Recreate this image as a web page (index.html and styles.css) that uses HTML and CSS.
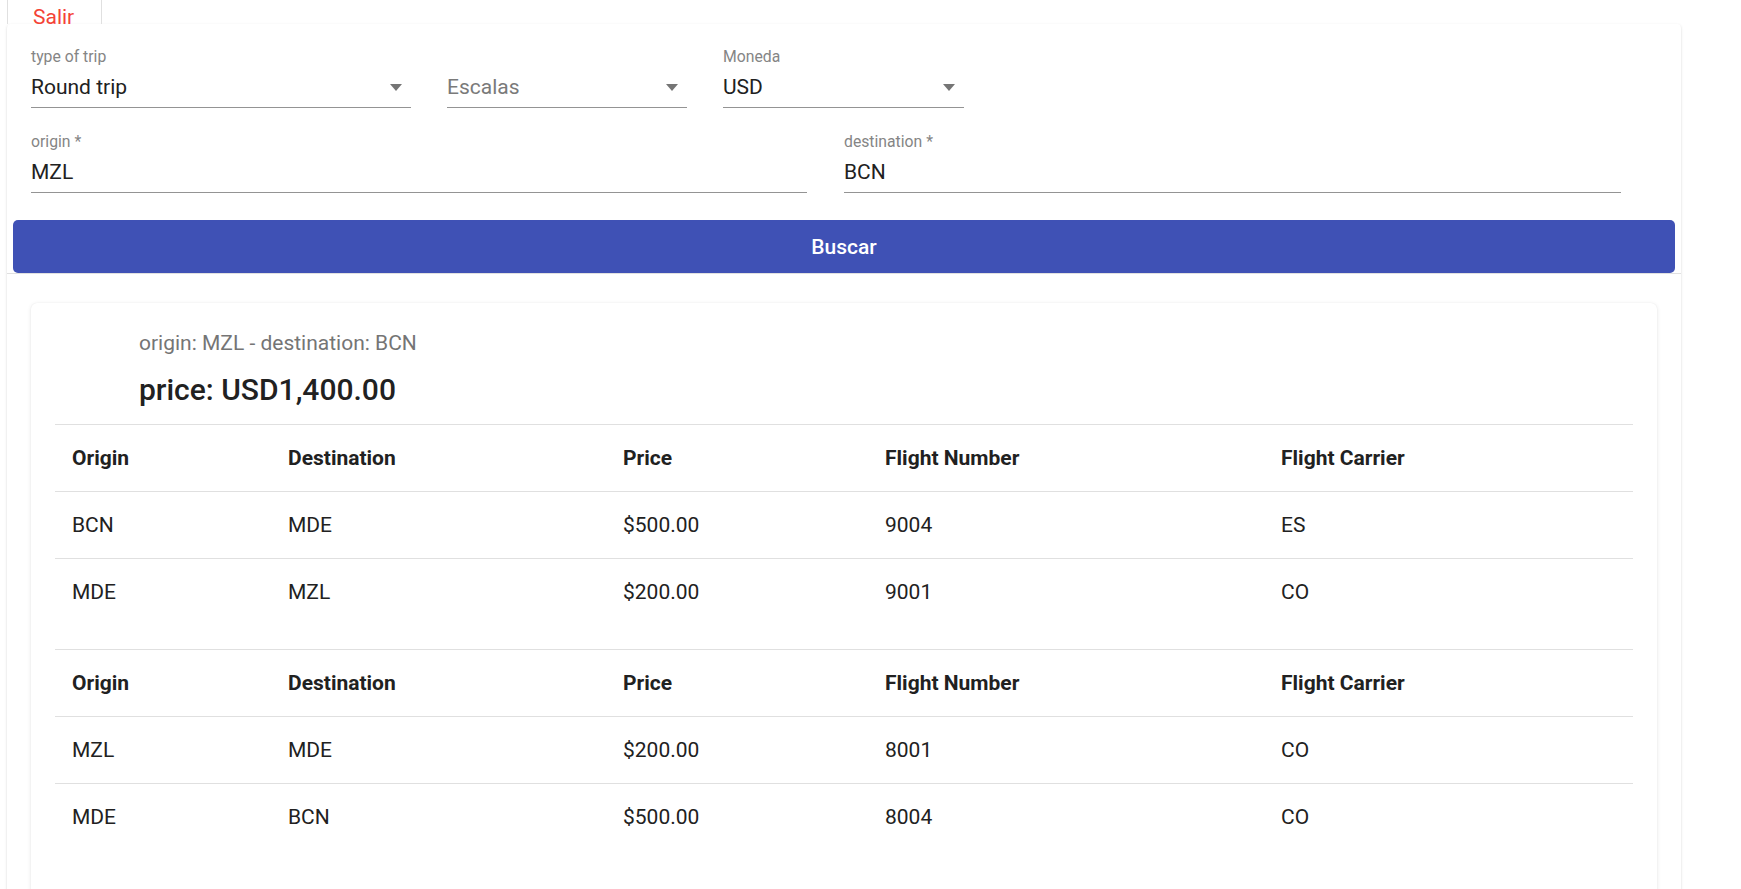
FILE: index.html
```html
<!DOCTYPE html>
<html lang="es">
<head>
<meta charset="utf-8">
<title>Vuelos</title>
<link rel="stylesheet" href="styles.css">
</head>
<body>
<div class="page">
  <nav class="topbar">
    <a class="tab">Salir</a>
  </nav>
  <main class="card">
    <form class="search">
      <div class="fields">
        <div class="row row-top">
          <div class="field w-trip">
            <span class="label">type of trip</span>
            <div class="control"><span class="value">Round trip</span><span class="arrow"></span></div>
          </div>
          <div class="field w-stops">
            <span class="label"></span>
            <div class="control"><span class="value placeholder">Escalas</span><span class="arrow"></span></div>
          </div>
          <div class="field w-cur">
            <span class="label">Moneda</span>
            <div class="control"><span class="value">USD</span><span class="arrow"></span></div>
          </div>
        </div>
        <div class="row row-bottom">
          <div class="field">
            <span class="label">origin *</span>
            <div class="control"><span class="value">MZL</span></div>
          </div>
          <div class="field">
            <span class="label">destination *</span>
            <div class="control"><span class="value">BCN</span></div>
          </div>
        </div>
      </div>
      <button type="button" class="btn">Buscar</button>
    </form>
    <section class="results">
      <article class="result-card">
        <header class="result-head">
          <p class="sub">origin: MZL - destination: BCN</p>
          <h2 class="price">price: USD1,400.00</h2>
        </header>
        <table class="legs">
          <colgroup><col class="c1"><col class="c2"><col class="c3"><col class="c4"><col class="c5"></colgroup>
          <thead>
            <tr><th>Origin</th><th>Destination</th><th>Price</th><th>Flight Number</th><th>Flight Carrier</th></tr>
          </thead>
          <tbody>
            <tr><td>BCN</td><td>MDE</td><td>$500.00</td><td>9004</td><td>ES</td></tr>
            <tr><td>MDE</td><td>MZL</td><td>$200.00</td><td>9001</td><td>CO</td></tr>
          </tbody>
        </table>
        <table class="legs">
          <colgroup><col class="c1"><col class="c2"><col class="c3"><col class="c4"><col class="c5"></colgroup>
          <thead>
            <tr><th>Origin</th><th>Destination</th><th>Price</th><th>Flight Number</th><th>Flight Carrier</th></tr>
          </thead>
          <tbody>
            <tr><td>MZL</td><td>MDE</td><td>$200.00</td><td>8001</td><td>CO</td></tr>
            <tr><td>MDE</td><td>BCN</td><td>$500.00</td><td>8004</td><td>CO</td></tr>
          </tbody>
        </table>
      </article>
    </section>
  </main>
</div>
</body>
</html>
```

FILE: styles.css
```css
* { box-sizing: border-box; }

html, body {
  margin: 0;
  padding: 0;
  background: #ffffff;
}

body {
  font-family: Roboto, "Liberation Sans", Arial, sans-serif;
  color: #212121;
  font-size: 21px;
}

.page {
  padding-left: 7px;
}

/* top bar */
.topbar {
  height: 24px;
  display: flex;
}

.tab {
  display: block;
  width: 95px;
  height: 24px;
  border-left: 1px solid #e0e0e0;
  border-right: 1px solid #e0e0e0;
  padding: 11px 0 0 25px;
  font-size: 21px;
  line-height: 13px;
  color: #f44336;
}

/* main card */
.card {
  width: 1674px;
  background: #fff;
  border-radius: 4px;
  box-shadow: 0 2px 1px -1px rgba(0,0,0,.2), 0 1px 1px 0 rgba(0,0,0,.14), 0 1px 3px 0 rgba(0,0,0,.12);
  min-height: 900px;
}

.search {
  padding: 24px 6px 0;
  border-bottom: 1px solid #e0e0e0;
}

.fields {
  padding: 0 18px;
}

.row {
  display: flex;
}

.row-top {
  gap: 36px;
}

.row-bottom {
  display: grid;
  grid-template-columns: 776px 777px;
  column-gap: 37px;
  margin-top: 25px;
}

.w-trip { width: 380px; }
.w-stops { width: 240px; }
.w-cur { width: 241px; }

.field {
  display: flex;
  flex-direction: column;
}

.label {
  display: block;
  height: 18px;
  font-size: 15.75px;
  line-height: 18px;
  color: #858585;
  white-space: nowrap;
}

.control {
  display: flex;
  align-items: center;
  margin-top: 9px;
  height: 33px;
  padding-bottom: 8px;
  border-bottom: 1px solid #949494;
}

.value {
  flex: 1;
  font-size: 21px;
  line-height: 24px;
  color: #212121;
}

.placeholder {
  color: #7a7a7a;
}

.arrow {
  width: 0;
  height: 0;
  margin-right: 9px;
  border-left: 6px solid transparent;
  border-right: 6px solid transparent;
  border-top: 7px solid #757575;
}

.btn {
  display: block;
  width: 100%;
  height: 53px;
  margin-top: 27px;
  border: 0;
  border-radius: 5px;
  background: #3f51b5;
  color: #fff;
  font-family: Roboto, "Liberation Sans", Arial, sans-serif;
  font-size: 21px;
  font-weight: 500;
  line-height: 24px;
  cursor: pointer;
}

/* results */
.results {
  padding: 29px 24px 0;
}

.result-card {
  background: #fff;
  border-radius: 6px;
  box-shadow: 0 1px 4px rgba(0,0,0,.10), 0 0 1px rgba(0,0,0,.08);
  padding: 0 24px 24px;
  min-height: 600px;
}

.result-head {
  padding: 28px 0 16px 84px;
}

.sub {
  margin: 0;
  font-size: 21px;
  line-height: 24px;
  color: #757575;
}

.price {
  margin: 17px 0 0;
  font-size: 30px;
  line-height: 36px;
  font-weight: 500;
  color: #212121;
}

.legs {
  width: 100%;
  table-layout: fixed;
  border-collapse: separate;
  border-spacing: 0;
}

.legs + .legs {
  margin-top: 24px;
}

.c1 { width: 216px; }
.c2 { width: 335px; }
.c3 { width: 262px; }
.c4 { width: 396px; }
.c5 { width: 369px; }

.legs th,
.legs td {
  height: 67px;
  padding: 0 0 0 17px;
  border-top: 1px solid #e0e0e0;
  text-align: left;
  vertical-align: middle;
  font-size: 21px;
  line-height: 24px;
  color: #212121;
  white-space: nowrap;
}

.legs th {
  font-weight: 700;
}

.legs td {
  font-weight: 400;
}
```
